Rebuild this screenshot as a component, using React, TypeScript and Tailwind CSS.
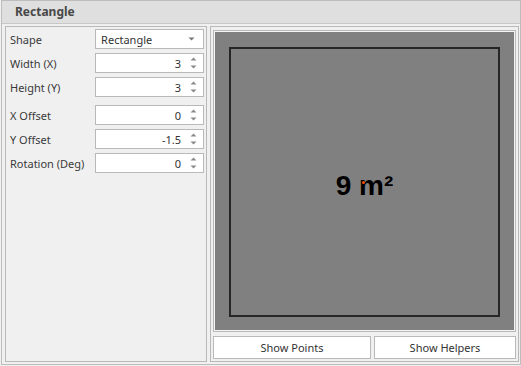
import React from "react";

const font = { fontFamily: '"Noto Sans", "Open Sans", sans-serif' };

function Spin() {
  return (
    <div className="flex flex-col items-center gap-[4px] mr-[6px]">
      <svg width="7" height="4" viewBox="0 0 7 4"><path d="M0.5 3.5 L3.5 0.5 L6.5 3.5 Z" fill="#8a8a8a" /></svg>
      <svg width="7" height="4" viewBox="0 0 7 4"><path d="M0.5 0.5 L3.5 3.5 L6.5 0.5 Z" fill="#8a8a8a" /></svg>
    </div>
  );
}

function NumRow({ label, value, extra }: { label: string; value: string; extra?: boolean }) {
  return (
    <div className={`flex items-center h-[20px] ${extra ? "mt-[8px]" : "mt-[4px]"}`}>
      <div className="w-[88px] pl-[2px] text-[#3a3a3a]">{label}</div>
      <div className="w-[110px] h-[20px] bg-white border border-[#b9b9b9] flex items-center">
        <div className="flex-1 text-right pr-[9px] text-[#333]">{value}</div>
        <Spin />
      </div>
    </div>
  );
}

export default function App() {
  return (
    <div className="w-[521px] h-[366px] bg-[#f0f0f0] text-[11px] leading-none" style={font}>
      <div className="ml-[1px] w-[520px] h-[365px] border border-[#bdbdbd] flex flex-col">
        <div className="h-[23px] bg-[#dfdfdf] border-b border-[#c8c8c8] flex items-center pl-[13px] font-bold text-[12px] text-[#484848]">
          Rectangle
        </div>
        <div className="flex-1 flex gap-[3px] pl-[3px] pr-[1px] pt-[2px] pb-[2px]">
          <div className="w-[202px] border border-[#b9b9b9] pl-[2px] pr-[2px] pt-[2px]">
            <div className="flex items-center h-[20px]">
              <div className="w-[88px] pl-[2px] text-[#3a3a3a]">Shape</div>
              <div className="w-[110px] h-[20px] bg-white border border-[#b9b9b9] flex items-center">
                <div className="flex-1 pl-[5px] text-[#333]">Rectangle</div>
                <svg className="mr-[8px]" width="7" height="4" viewBox="0 0 7 4"><path d="M0.5 0.5 L3.5 3.5 L6.5 0.5 Z" fill="#777" /></svg>
              </div>
            </div>
            <NumRow label="Width (X)" value="3" />
            <NumRow label="Height (Y)" value="3" />
            <NumRow label="X Offset" value="0" extra />
            <NumRow label="Y Offset" value="-1.5" />
            <NumRow label="Rotation (Deg)" value="0" />
          </div>
          <div className="w-[309px] border border-[#b9b9b9] pl-[2px] pr-[2px] pt-[3px] pb-[1px] flex flex-col">
            <div className="h-[302px] border border-[#b9b9b9] p-[1px] bg-[#f4f4f4]">
              <div className="w-full h-full bg-[#808080] relative">
                <div className="absolute left-[14px] top-[15px] w-[271px] h-[270px] border-2 border-[#262626] flex items-center justify-center">
                  <div
                    className="font-bold text-[28px] text-black mt-[9px]"
                    style={{ fontFamily: '"Liberation Sans", Arial, sans-serif', lineHeight: 1.15 }}
                  >
                    9 m²
                  </div>
                </div>
                <div className="absolute left-[147px] top-[149px] w-[3px] h-[3px] rounded-full bg-[#ff4a00]" />
              </div>
            </div>
            <div className="flex gap-[3px] mt-[4px] h-[23px]">
              <div className="w-[158px] bg-white border border-[#b9b9b9] flex items-center justify-center text-[#333]">Show Points</div>
              <div className="flex-1 bg-white border border-[#b9b9b9] flex items-center justify-center text-[#333]">Show Helpers</div>
            </div>
          </div>
        </div>
      </div>
    </div>
  );
}
